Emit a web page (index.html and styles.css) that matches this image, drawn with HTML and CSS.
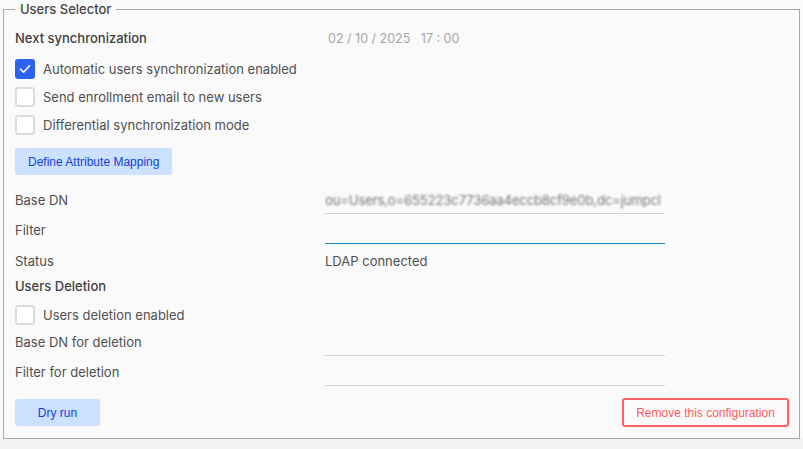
FILE: index.html
```html
<!DOCTYPE html>
<html>
<head>
<meta charset="utf-8">
<link rel="stylesheet" href="styles.css">
</head>
<body>
<div class="page">
  <fieldset class="selector">
    <legend class="legend">Users Selector</legend>

    <div class="row sync-row">
      <span class="label strong">Next synchronization</span>
      <span class="date">02 / 10 / 2025&nbsp;&nbsp;&nbsp;17 : 00</span>
    </div>

    <div class="checks">
      <label class="check">
        <span class="box checked">
          <svg width="12" height="10" viewBox="0 0 12 10"><path d="M1.5 5.2 L4.6 8.2 L10.5 1.8" fill="none" stroke="#fff" stroke-width="1.6" stroke-linecap="round" stroke-linejoin="round"/></svg>
        </span>
        <span class="check-text">Automatic users synchronization enabled</span>
      </label>
      <label class="check">
        <span class="box"></span>
        <span class="check-text">Send enrollment email to new users</span>
      </label>
      <label class="check">
        <span class="box"></span>
        <span class="check-text">Differential synchronization mode</span>
      </label>
    </div>

    <button class="btn btn-primary mapping">Define Attribute Mapping</button>

    <div class="fields">
      <div class="row field">
        <span class="label">Base DN</span>
        <div class="input"><span class="blurred">ou=Users,o=655223c7736aa4eccb8cf9e0b,dc=jumpcl</span></div>
      </div>
      <div class="row field">
        <span class="label">Filter</span>
        <div class="input focused"></div>
      </div>
      <div class="row status-row">
        <span class="label">Status</span>
        <span class="value">LDAP connected</span>
      </div>
    </div>

    <div class="heading">Users Deletion</div>

    <label class="check deletion-check">
      <span class="box"></span>
      <span class="check-text">Users deletion enabled</span>
    </label>

    <div class="row field">
      <span class="label">Base DN for deletion</span>
      <div class="input"></div>
    </div>
    <div class="row field">
      <span class="label">Filter for deletion</span>
      <div class="input"></div>
    </div>

    <div class="actions">
      <button class="btn btn-primary dry">Dry run</button>
      <button class="btn btn-danger">Remove this configuration</button>
    </div>
  </fieldset>
</div>
</body>
</html>
```

FILE: styles.css
```css
html, body {
  margin: 0;
  padding: 0;
  background: #f3f3f3;
}
body {
  font-family: Inter, "Noto Sans", sans-serif;
  font-size: 13px;
  color: #4a4a4a;
}
.page {
  background: #fafafa;
  padding: 0 3px 0 3px;
  height: 439px;
  box-sizing: border-box;
}
.selector {
  margin: 0;
  border: 1px solid #a9a9a9;
  padding: 8px 10px 11px 11px;
  min-width: 0;
}
.legend {
  padding: 0 5px;
  margin-left: 0;
  font-size: 13px;
  line-height: 18px;
  font-weight: 500;
  color: #454545;
}
.row {
  display: grid;
  grid-template-columns: 310px 340px;
  align-items: center;
}
.sync-row {
  height: 24px;
}
.label {
  color: #505050;
}
.strong {
  font-weight: 500;
  color: #404040;
}
.date {
  color: #a6a6a6;
  padding-left: 3px;
  font-size: 12.5px;
}
.checks {
  margin-top: 5px;
}
.check {
  display: flex;
  align-items: center;
  height: 28px;
}
.box {
  box-sizing: border-box;
  width: 20px;
  height: 20px;
  border: 2px solid #dcdcdc;
  border-radius: 3px;
  background: #fff;
  display: flex;
  align-items: center;
  justify-content: center;
  margin-right: 8px;
}
.box.checked {
  background: #2b63ee;
  border-color: #2b63ee;
}
.check-text {
  color: #505050;
}
.btn {
  font-family: "Liberation Sans", Arial, sans-serif;
  font-size: 12px;
  border-radius: 3px;
  cursor: pointer;
}
.btn-primary {
  background: #cce0ff;
  color: #1241d9;
  border: none;
  height: 27px;
  padding: 0 13px;
}
.mapping {
  margin-top: 9px;
  display: block;
}
.fields {
  margin-top: 10px;
}
.field {
  height: 30px;
}
.input {
  box-sizing: border-box;
  height: 27px;
  border-bottom: 1px solid #d4d4d4;
  overflow: hidden;
  white-space: nowrap;
  display: flex;
  align-items: center;
}
.input.focused {
  border-bottom-color: #1d7fc4;
}
.blurred {
  font-size: 13.2px;
  letter-spacing: -0.2px;
  color: #777;
  filter: blur(1.3px);
}
.status-row {
  height: 31px;
}
.value {
  color: #505050;
}
.heading {
  height: 20px;
  line-height: 20px;
  font-weight: 500;
  color: #404040;
}
.deletion-check {
  margin-top: 6px;
  height: 25px;
}
.actions {
  margin-top: 11px;
  display: flex;
  justify-content: space-between;
  align-items: center;
}
.dry {
  width: 85px;
  padding: 0;
}
.btn-danger {
  background: transparent;
  border: 2px solid #ff6464;
  color: #ff5a5a;
  height: 29px;
  width: 167px;
  padding: 0;
}
```
